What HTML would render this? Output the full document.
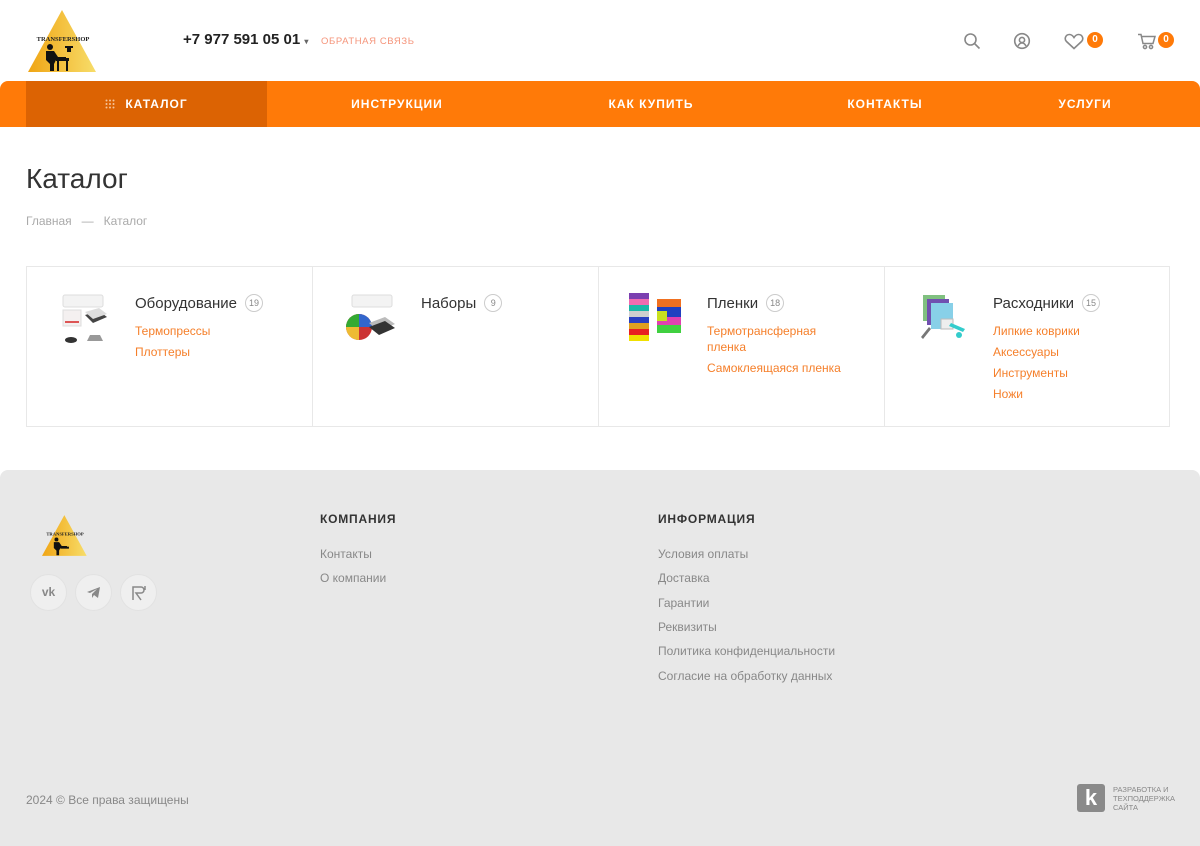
<!DOCTYPE html>
<html><head><meta charset="utf-8">
<style>
*{box-sizing:border-box;margin:0;padding:0}
body{width:1200px;height:846px;background:#fff;font-family:"Liberation Sans",sans-serif;color:#333;position:relative;overflow:hidden}
a{text-decoration:none}
.abs{position:absolute}
.nav{position:absolute;left:0;top:81px;width:1200px;height:46px;background:#ff7a08;border-radius:8px 8px 0 0}
.nav div{position:absolute;top:0;height:46px;line-height:46px;color:#fff;font-weight:bold;font-size:12px;letter-spacing:1px;text-align:center}
.card{position:absolute;top:266px;height:161px;border:1px solid #e8e8e8}
.card .t{position:absolute;left:108px;top:27px;font-size:15px;color:#333}
.card .n{display:inline-block;margin-left:8px;width:18px;height:18px;border:1px solid #ccc;border-radius:50%;font-size:9px;color:#888;text-align:center;line-height:16px;vertical-align:2px}
.card .l{position:absolute;left:108px;font-size:12px;color:#f57f2a;line-height:16px}
.card .im{position:absolute;left:30px;top:26px;width:60px;height:52px}
.foot{position:absolute;left:0;top:470px;width:1200px;height:376px;background:#e8e8e8;border-radius:8px 8px 0 0}
.fh{position:absolute;font-size:12px;font-weight:bold;letter-spacing:.8px;color:#333}
.fl{position:absolute;font-size:12px;color:#888}
.soc{position:absolute;top:574px;width:37px;height:37px;border-radius:50%;background:#efefef;border:1px solid #e2e2e2}
.badge{position:absolute;width:16px;height:16px;border-radius:50%;background:#ff7a08;color:#fff;font-size:10px;font-weight:bold;text-align:center;line-height:16px}
</style></head><body>

<!-- logo -->
<svg class="abs" style="left:28px;top:10px" width="70" height="62" viewBox="0 0 70 62">
<defs><linearGradient id="g" x1="0" x2="1"><stop offset="0" stop-color="#f0a514"/><stop offset="1" stop-color="#f7dd6a"/></linearGradient></defs>
<polygon points="34,0 68,62 0,62" fill="url(#g)"/>
<text x="35" y="31" font-size="6.5" font-weight="bold" text-anchor="middle" font-family="Liberation Serif,serif" fill="#222">TRANSFERSHOP</text>
<circle cx="22" cy="37" r="3" fill="#111"/><path d="M18 41h8l4 6h8v3H28l-2 4v7h-4v-7l-4-4z" fill="#111"/><rect x="28" y="48" width="13" height="3" fill="#111"/><rect x="29" y="51" width="2" height="10" fill="#111"/><rect x="38" y="51" width="2" height="10" fill="#111"/><path d="M37 36h8v2h-2v4h-4v-4h-2z" fill="#111"/>
</svg>

<div class="abs" style="left:183px;top:31px;font-size:15px;font-weight:bold;color:#222">+7 977 591 05 01 <span style="font-size:8px;color:#666">▾</span></div>
<div class="abs" style="left:321px;top:36px;font-size:9.5px;color:#f5947a;letter-spacing:.6px">ОБРАТНАЯ СВЯЗЬ</div>

<!-- icons -->
<svg class="abs" style="left:963px;top:32px" width="18" height="18" viewBox="0 0 18 18" fill="none" stroke="#888" stroke-width="1.6"><circle cx="7.5" cy="7.5" r="5.5"/><path d="M11.5 11.5l5 5"/></svg>
<svg class="abs" style="left:1013px;top:32px" width="18" height="18" viewBox="0 0 18 18" fill="none" stroke="#888" stroke-width="1.6"><circle cx="9" cy="9" r="7.3"/><circle cx="9" cy="8" r="2.6"/><path d="M5 14c1-2 2.5-3 4-3s3 1 4 3"/></svg>
<svg class="abs" style="left:1064px;top:33px" width="20" height="17" viewBox="0 0 20 17" fill="none" stroke="#888" stroke-width="1.6"><path d="M10 15.5L2.5 8.5C0 6 1.5 1.5 5.5 1.5c2 0 3.5 1.5 4.5 3 1-1.5 2.5-3 4.5-3 4 0 5.5 4.5 3 7z"/></svg>
<div class="badge" style="left:1087px;top:32px">0</div>
<svg class="abs" style="left:1137px;top:33px" width="20" height="17" viewBox="0 0 20 17" fill="none" stroke="#888" stroke-width="1.5"><path d="M1 1.5h3l2 9h10l2-7H5"/><circle cx="8" cy="14" r="1.6"/><circle cx="14" cy="14" r="1.6"/></svg>
<div class="badge" style="left:1158px;top:32px">0</div>

<!-- nav -->
<div class="nav">
<div style="left:26px;width:241px;background:#dc6303">
<svg width="10" height="10" viewBox="0 0 10 10" style="vertical-align:-1px;margin-right:10px" fill="#f6c59a"><circle cx="1.5" cy="1.5" r="1"/><circle cx="5" cy="1.5" r="1"/><circle cx="8.5" cy="1.5" r="1"/><circle cx="1.5" cy="5" r="1"/><circle cx="5" cy="5" r="1"/><circle cx="8.5" cy="5" r="1"/><circle cx="1.5" cy="8.5" r="1"/><circle cx="5" cy="8.5" r="1"/><circle cx="8.5" cy="8.5" r="1"/></svg>КАТАЛОГ</div>
<div style="left:297px;width:200px">ИНСТРУКЦИИ</div>
<div style="left:551px;width:200px">КАК КУПИТЬ</div>
<div style="left:785px;width:200px">КОНТАКТЫ</div>
<div style="left:985px;width:200px">УСЛУГИ</div>
</div>

<div class="abs" style="left:26px;top:163px;font-size:28px;color:#333">Каталог</div>
<div class="abs" style="left:26px;top:214px;font-size:12px;color:#aaa">Главная &nbsp; — &nbsp; Каталог</div>

<!-- cards -->
<div class="card" style="left:26px;width:287px">
<svg class="im" viewBox="0 0 60 52"><rect x="6" y="2" width="40" height="12" rx="2" fill="#f3f3f3" stroke="#ddd"/><rect x="6" y="17" width="18" height="16" fill="#f4f0f0" stroke="#ddd"/><rect x="8" y="28" width="14" height="2" fill="#d55"/><path d="M28 22l14-4 8 6-14 6z" fill="#444"/><path d="M28 22l14-4 8 6-14 5z" fill="#ddd" transform="translate(0,-3)"/><ellipse cx="14" cy="47" rx="6" ry="3" fill="#333"/><path d="M30 48h16l-3-6h-10z" fill="#999"/></svg>
<div class="t">Оборудование<span class="n">19</span></div>
<div class="l" style="top:56px">Термопрессы</div>
<div class="l" style="top:77px">Плоттеры</div>
</div>
<div class="card" style="left:312px;width:287px">
<svg class="im" viewBox="0 0 60 52"><rect x="9" y="2" width="40" height="12" rx="2" fill="#f3f3f3" stroke="#ddd"/><circle cx="16" cy="34" r="13" fill="#c33"/><path d="M16 21a13 13 0 0113 13H16z" fill="#36c"/><path d="M3 34a13 13 0 0113-13v13z" fill="#3a3"/><path d="M16 47a13 13 0 01-13-13h13z" fill="#eb3"/><path d="M26 30l16-6 10 7-16 7z" fill="#bbb"/><path d="M26 34l16-6 10 7-16 7z" fill="#333"/></svg>
<div class="t">Наборы<span class="n">9</span></div>
</div>
<div class="card" style="left:598px;width:287px">
<svg class="im" viewBox="0 0 60 52"><rect x="0" y="0" width="20" height="6" fill="#7b3fb0"/><rect x="0" y="6" width="20" height="6" fill="#f06bb0"/><rect x="0" y="12" width="20" height="6" fill="#1bb8a8"/><rect x="0" y="18" width="20" height="6" fill="#cfcfcf"/><rect x="0" y="24" width="20" height="6" fill="#2a3fc0"/><rect x="0" y="30" width="20" height="6" fill="#e0a020"/><rect x="0" y="36" width="20" height="6" fill="#e82020"/><rect x="0" y="42" width="20" height="6" fill="#f0e000"/><rect x="28" y="6" width="24" height="8" fill="#f07020"/><rect x="28" y="14" width="24" height="10" fill="#2040c0"/><rect x="28" y="24" width="24" height="8" fill="#e040b0"/><rect x="28" y="32" width="24" height="8" fill="#40d040"/><rect x="28" y="18" width="10" height="10" fill="#c8e020"/></svg>
<div class="t">Пленки<span class="n">18</span></div>
<div class="l" style="top:56px">Термотрансферная<br>пленка</div>
<div class="l" style="top:93px">Самоклеящаяся пленка</div>
</div>
<div class="card" style="left:884px;width:286px">
<svg class="im" viewBox="0 0 60 52"><rect x="8" y="2" width="22" height="26" fill="#80c080"/><rect x="12" y="6" width="22" height="26" fill="#7050b0"/><rect x="16" y="10" width="22" height="26" fill="#88d0e8"/><rect x="26" y="26" width="12" height="10" fill="#eee" stroke="#bbb"/><path d="M36 30l14 6-2 3-14-6z" fill="#3cc"/><path d="M6 44l8-10 2 2-8 10z" fill="#777"/><circle cx="44" cy="42" r="3" fill="#3cc"/></svg>
<div class="t">Расходники<span class="n">15</span></div>
<div class="l" style="top:56px">Липкие коврики</div>
<div class="l" style="top:77px">Аксессуары</div>
<div class="l" style="top:98px">Инструменты</div>
<div class="l" style="top:119px">Ножи</div>
</div>

<!-- footer -->
<div class="foot"></div>
<svg class="abs" style="left:42px;top:515px" width="46" height="41" viewBox="0 0 70 62">
<polygon points="34,0 68,62 0,62" fill="url(#g)"/>
<text x="35" y="31" font-size="7" font-weight="bold" text-anchor="middle" font-family="Liberation Serif,serif" fill="#222">TRANSFERSHOP</text>
<circle cx="22" cy="37" r="3" fill="#111"/><path d="M18 41h8l4 6h8v3H28l-2 4v7h-4v-7l-4-4z" fill="#111"/><rect x="28" y="48" width="13" height="3" fill="#111"/>
</svg>
<div class="soc" style="left:30px"><div style="text-align:center;line-height:35px;font-size:12px;font-weight:bold;color:#888">vk</div></div>
<div class="soc" style="left:75px"><svg style="margin:11px 0 0 10px" width="15" height="13" viewBox="0 0 15 13"><path d="M1 6l13-5-2 11-4-3-2 3v-4l5-5-7 4z" fill="#888"/></svg></div>
<div class="soc" style="left:120px"><svg style="margin:10px 0 0 10px" width="16" height="16" viewBox="0 0 16 16" fill="none" stroke="#888" stroke-width="1.5"><path d="M2 15V2h8a3 3 0 010 6H5l5 7M14 1v4"/></svg></div>

<div class="fh" style="left:320px;top:512px">КОМПАНИЯ</div>
<div class="fl" style="left:320px;top:547px">Контакты</div>
<div class="fl" style="left:320px;top:571px">О компании</div>
<div class="fh" style="left:658px;top:512px">ИНФОРМАЦИЯ</div>
<div class="fl" style="left:658px;top:547px">Условия оплаты</div>
<div class="fl" style="left:658px;top:571px">Доставка</div>
<div class="fl" style="left:658px;top:596px">Гарантии</div>
<div class="fl" style="left:658px;top:620px">Реквизиты</div>
<div class="fl" style="left:658px;top:644px">Политика конфиденциальности</div>
<div class="fl" style="left:658px;top:669px">Согласие на обработку данных</div>

<div class="fl" style="left:26px;top:793px">2024 © Все права защищены</div>
<div class="abs" style="left:1077px;top:784px;width:28px;height:28px;background:#8a8a8a;border-radius:3px;color:#fff;font-weight:bold;font-size:22px;text-align:center;line-height:27px">k</div>
<div class="abs" style="left:1113px;top:785px;font-size:7.5px;color:#888;line-height:9px">РАЗРАБОТКА И<br>ТЕХПОДДЕРЖКА<br>САЙТА</div>
</body></html>
